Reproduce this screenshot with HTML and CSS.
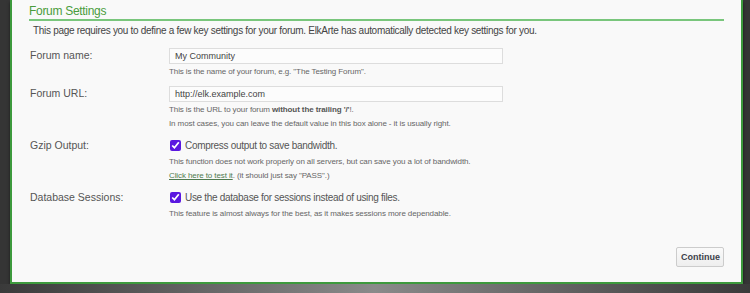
FILE: index.html
```html
<!DOCTYPE html>
<html lang="en">
<head>
  <meta charset="UTF-8" />
  <title>ElkArte Install - Forum Settings</title>
  <link rel="stylesheet" href="styles.css">
</head>
<body>
  <div class="panel">
    <h2 class="title">Forum Settings</h2>
    <p class="intro">This page requires you to define a few key settings for your forum. ElkArte has automatically detected key settings for you.</p>

    <dl class="settings">
      <dt>Forum name:</dt>
      <dd>
        <input type="text" class="field" value="My Community">
        <div class="note">This is the name of your forum, e.g. "The Testing Forum".</div>
      </dd>

      <dt>Forum URL:</dt>
      <dd>
        <input type="text" class="field" value="http://elk.example.com">
        <div class="note">This is the URL to your forum <strong>without the trailing '/'</strong>!.</div>
        <div class="note">In most cases, you can leave the default value in this box alone - it is usually right.</div>
      </dd>

      <dt>Gzip Output:</dt>
      <dd>
        <label class="check"><input type="checkbox" checked> Compress output to save bandwidth.</label>
        <div class="note">This function does not work properly on all servers, but can save you a lot of bandwidth.</div>
        <div class="note"><a href="#">Click here to test it</a>. (it should just say "PASS".)</div>
      </dd>

      <dt>Database Sessions:</dt>
      <dd>
        <label class="check"><input type="checkbox" checked> Use the database for sessions instead of using files.</label>
        <div class="note">This feature is almost always for the best, as it makes sessions more dependable.</div>
      </dd>
    </dl>

    <div class="actions">
      <button class="button">Continue</button>
    </div>
  </div>
  <div class="floor"></div>
</body>
</html>
```

FILE: styles.css
```css
body {
  margin: 0;
  background: #353535;
  font-family: 'Liberation Sans', Arial, sans-serif;
  color: #555;
}
.panel {
  margin: 0 7px 0 10px;
  height: 284px;
  box-sizing: border-box;
  background: #f9f9f9;
  border: 2px solid #3d9a3d;
  border-top: none;
  padding: 0 17px;
  box-shadow: 0 2px 3px rgba(0, 0, 0, 0.5);
}
.title {
  margin: 0;
  padding: 4px 0 1px 0;
  font-size: 12px;
  letter-spacing: -0.3px;
  font-weight: normal;
  color: #4a9c3c;
  border-bottom: 2px solid #79c67c;
}
.intro {
  margin: 4px 0 0 4px;
  font-size: 10px;
  letter-spacing: -0.3px;
  color: #444;
}
.settings {
  display: grid;
  grid-template-columns: 139px 1fr;
  row-gap: 7px;
  margin: 12px 0 0 1px;
}
.settings dt {
  font-size: 10.5px;
  color: #555;
  padding-top: 1px;
}
.settings dd {
  margin: 0;
}
.field {
  display: block;
  width: 334px;
  height: 16px;
  box-sizing: border-box;
  margin: 0;
  padding: 0 5px;
  border: 1px solid #ddd;
  background: #fcfcfc;
  font-family: inherit;
  font-size: 9px;
  color: #444;
}
.note {
  font-size: 8px;
  letter-spacing: -0.1px;
  line-height: 14px;
  color: #666;
}
.note:first-of-type {
  margin-top: 1px;
}
.note strong {
  color: #555;
}
.note a {
  color: #4f7a4f;
}
.check {
  display: flex;
  align-items: center;
  gap: 4px;
  font-size: 10px;
  letter-spacing: -0.3px;
  color: #555;
  height: 14px;
  margin-bottom: 3px;
}
.check input {
  margin: 0 0 0 1px;
  width: 11px;
  height: 11px;
  accent-color: #5a17e0;
}
.actions {
  display: flex;
  justify-content: flex-end;
  margin-top: 26px;
}
.button {
  font-family: inherit;
  font-size: 9px;
  font-weight: bold;
  color: #3c3f4a;
  padding: 3px 4px;
  background: linear-gradient(#fafafa, #eee);
  border: 1px solid #ccc;
  border-radius: 2px;
  height: 20px;
  width: 48px;
}
.floor {
  height: 9px;
  background: linear-gradient(to right, #3a3a3a, #8a8a8a 50%, #3a3a3a);
}
```
